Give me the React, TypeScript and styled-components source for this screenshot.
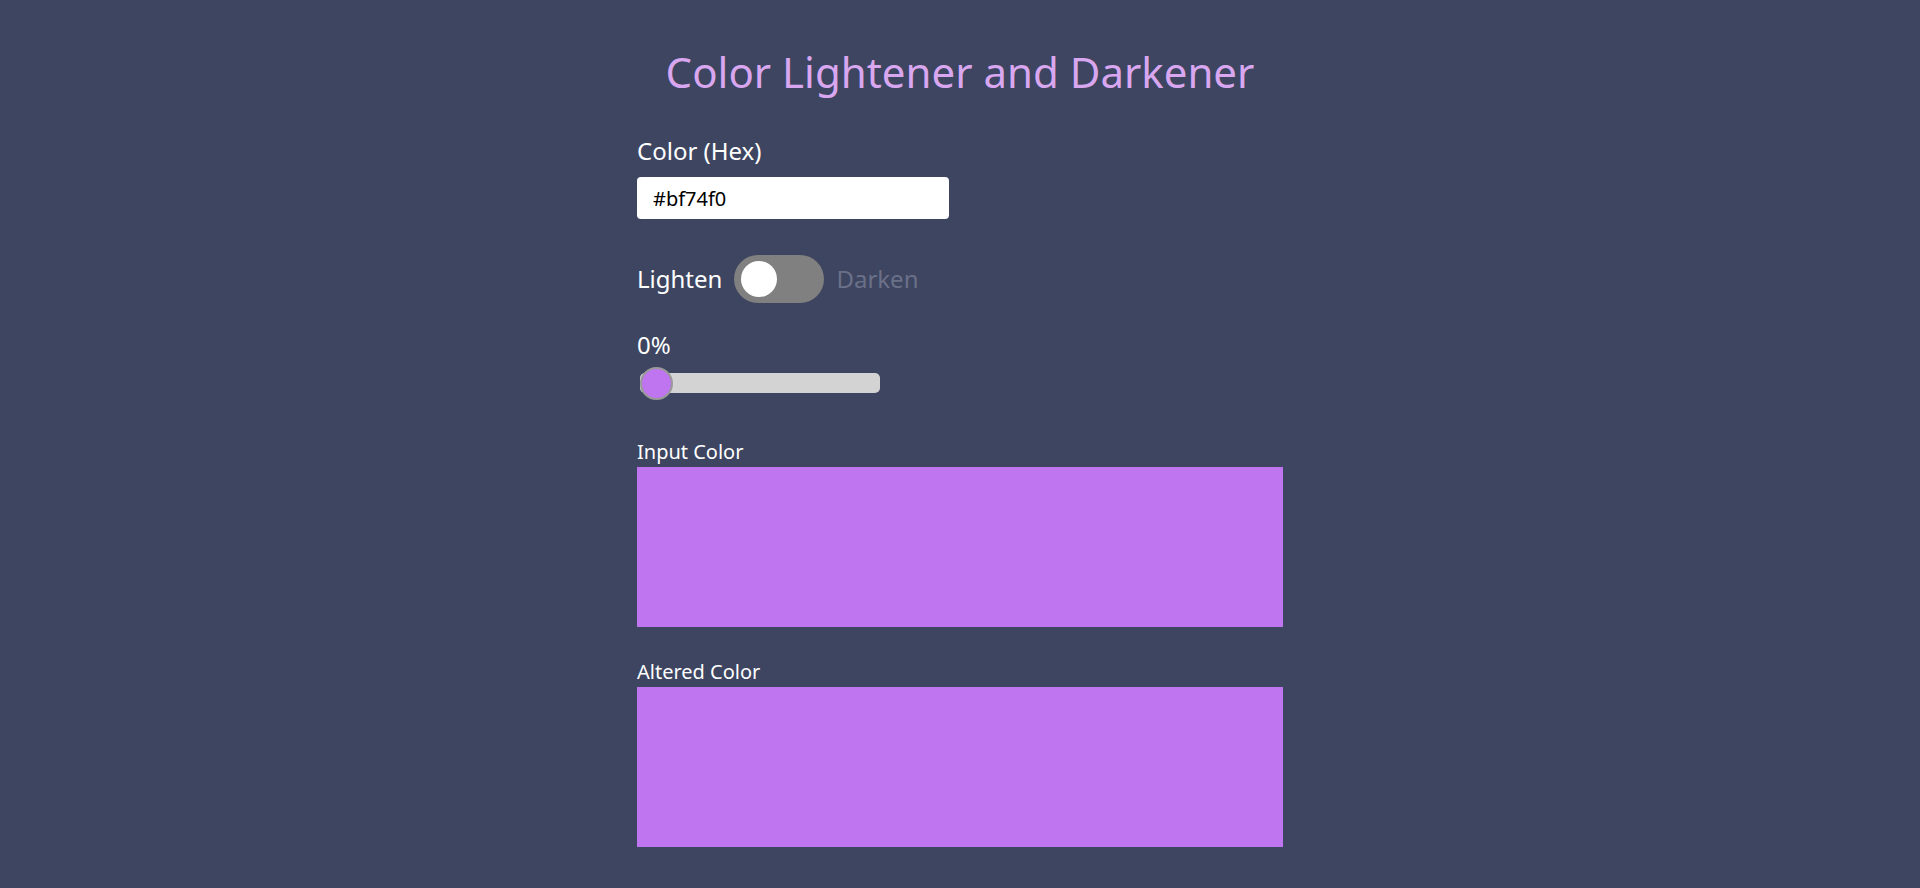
import React, { useState } from "react";
import styled, { createGlobalStyle } from "styled-components";

const GlobalStyle = createGlobalStyle`
  html, body {
    margin: 0;
    padding: 0;
    background: #3d4560;
    min-height: 100%;
  }
  body {
    font-family: "Noto Sans", "Open Sans", sans-serif;
    color: #ffffff;
  }
  * { box-sizing: border-box; }
`;

const Page = styled.main`
  width: 646px;
  margin: 0 auto;
  padding-top: 44px;
  padding-bottom: 41px;
  display: flex;
  flex-direction: column;
`;

const Title = styled.h1`
  margin: 0;
  font-size: 42px;
  line-height: 56px;
  font-weight: 400;
  color: #d8a7f0;
  text-align: center;
`;

const Field = styled.div`
  margin-top: 35px;
  display: flex;
  flex-direction: column;
  align-items: flex-start;
`;

const FieldLabel = styled.label`
  font-size: 24px;
  line-height: 32px;
  color: #ffffff;
`;

const HexInput = styled.input`
  margin-top: 10px;
  width: 312px;
  height: 42px;
  padding: 0 16px;
  border: none;
  border-radius: 4px;
  background: #ffffff;
  color: #000000;
  font-family: "Noto Sans", "Open Sans", sans-serif;
  font-size: 20px;
  outline: none;
`;

const ToggleRow = styled.div`
  margin-top: 36px;
  height: 48px;
  display: flex;
  align-items: center;
  gap: 12px;
`;

const ModeText = styled.span<{ $active: boolean }>`
  font-size: 24px;
  line-height: 32px;
  color: ${(p) => (p.$active ? "#ffffff" : "#6b7089")};
`;

const Toggle = styled.button<{ $on: boolean }>`
  width: 90px;
  height: 48px;
  padding: 0 7px;
  border: none;
  border-radius: 24px;
  background: #808080;
  display: flex;
  align-items: center;
  justify-content: ${(p) => (p.$on ? "flex-end" : "flex-start")};
  cursor: pointer;
`;

const Knob = styled.span`
  width: 36px;
  height: 36px;
  border-radius: 50%;
  background: #ffffff;
`;

const Percent = styled.div`
  margin-top: 26px;
  font-size: 24px;
  line-height: 32px;
`;

const Range = styled.input`
  -webkit-appearance: none;
  appearance: none;
  margin: 12px 0 0 3px;
  padding: 0;
  width: 240px;
  height: 20px;
  border-radius: 5px;
  background: #d3d3d3;
  outline: none;

  &::-webkit-slider-thumb {
    -webkit-appearance: none;
    appearance: none;
    box-sizing: border-box;
    width: 33px;
    height: 33px;
    border-radius: 50%;
    border: 2px solid #999999;
    background: #bf74f0;
    cursor: pointer;
  }
  &::-moz-range-thumb {
    box-sizing: border-box;
    width: 33px;
    height: 33px;
    border-radius: 50%;
    border: 2px solid #999999;
    background: #bf74f0;
  }
`;

const SwatchBlock = styled.section<{ $gap: number }>`
  margin-top: ${(p) => p.$gap}px;
  display: flex;
  flex-direction: column;
`;

const SwatchLabel = styled.div`
  font-size: 20px;
  line-height: 27px;
`;

const Swatch = styled.div<{ $color: string }>`
  margin-top: 2px;
  width: 100%;
  height: 160px;
  background: ${(p) => p.$color};
`;

export default function App() {
  const [hex, setHex] = useState("#bf74f0");
  const [darken, setDarken] = useState(false);
  const [amount, setAmount] = useState(0);

  return (
    <>
      <GlobalStyle />
      <Page>
        <Title>Color Lightener and Darkener</Title>
        <Field>
          <FieldLabel htmlFor="hex">Color (Hex)</FieldLabel>
          <HexInput id="hex" value={hex} onChange={(e) => setHex(e.target.value)} />
        </Field>
        <ToggleRow>
          <ModeText $active={!darken}>Lighten</ModeText>
          <Toggle $on={darken} onClick={() => setDarken(!darken)} aria-label="toggle">
            <Knob />
          </Toggle>
          <ModeText $active={darken}>Darken</ModeText>
        </ToggleRow>
        <Percent>{amount}%</Percent>
        <Range
          type="range"
          min={0}
          max={100}
          value={amount}
          onChange={(e) => setAmount(Number(e.target.value))}
        />
        <SwatchBlock $gap={45}>
          <SwatchLabel>Input Color</SwatchLabel>
          <Swatch $color={hex} />
        </SwatchBlock>
        <SwatchBlock $gap={31}>
          <SwatchLabel>Altered Color</SwatchLabel>
          <Swatch $color={hex} />
        </SwatchBlock>
      </Page>
    </>
  );
}
